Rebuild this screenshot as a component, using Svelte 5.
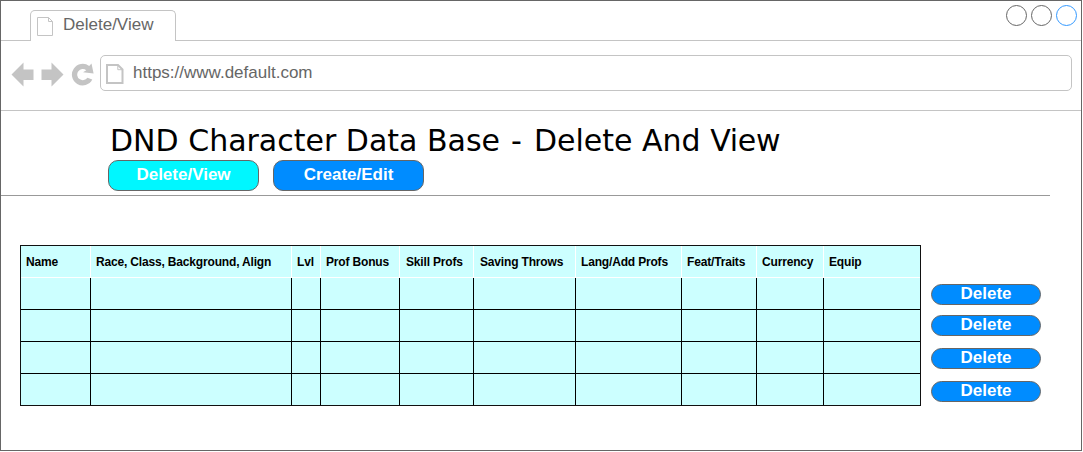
<script>
  const columns = [
    { label: 'Name', width: 70 },
    { label: 'Race, Class, Background, Align', width: 201 },
    { label: 'Lvl', width: 29 },
    { label: 'Prof Bonus', width: 79 },
    { label: 'Skill Profs', width: 74, inset: true },
    { label: 'Saving Throws', width: 102, inset: true },
    { label: 'Lang/Add Profs', width: 106 },
    { label: 'Feat/Traits', width: 75 },
    { label: 'Currency', width: 67 },
    { label: 'Equip', width: 96 },
  ];
  const rows = [1, 2, 3, 4];
</script>

<div class="window">
  <header class="tabs">
    <div class="lead"></div>
    <div class="tab">
      <svg class="tab-icon" width="17" height="20" viewBox="0 0 17 20">
        <path d="M.5 .5H11.5L15.5 4.5V18.5H.5ZM11.5 .5V4.5H15.5" fill="none" stroke="#c4c4c4" />
      </svg>
      <span>Delete/View</span>
    </div>
    <div class="controls">
      <i></i><i></i><i class="active"></i>
    </div>
  </header>

  <div class="toolbar">
    <svg class="nav" width="86" height="26" viewBox="0 0 86 26">
      <g fill="#c4c4c4">
        <path d="M0.5 12.5L12.5 .5V7.5H22.5V18H12.5V24.5Z" />
        <path d="M52.5 12.5L40.5 .5V7.5H30.5V18H40.5V24.5Z" />
        <path d="M80.5 1.5L82.6 11.6L72 10.2L75.3 8.2A5.6 5.6 0 1 0 76.4 15.8L81.3 17.6A10.8 10.8 0 1 1 78.2 4Z" />
      </g>
    </svg>
    <div class="address">
      <svg width="18" height="21" viewBox="0 0 18 21">
        <path d="M1 1H12L16.5 5.5V19H1Z" fill="none" stroke="#c4c4c4" stroke-width="2" />
        <path d="M11.8 1V5.7H16.5" fill="none" stroke="#c4c4c4" />
      </svg>
      <span>https://www.default.com</span>
    </div>
  </div>

  <section class="heading">
    <h1>DND Character Data Base <span class="dash">-</span> Delete And <span class="last">View</span></h1>
    <nav>
      <button class="current">Delete/View</button>
      <button>Create/Edit</button>
    </nav>
  </section>

  <main>
    <table>
      <colgroup>
        {#each columns as c}<col style="width: {c.width}px" />{/each}
      </colgroup>
      <thead>
        <tr>{#each columns as c}<th class:inset={c.inset}>{c.label}</th>{/each}</tr>
      </thead>
      <tbody>
        {#each rows as r}
          <tr>{#each columns as c}<td></td>{/each}</tr>
        {/each}
      </tbody>
    </table>
    <div class="actions">
      {#each rows as r}<button>Delete</button>{/each}
    </div>
  </main>
</div>

<style>
  :global(body) { background: #fff; }
  .window {
    box-sizing: border-box;
    width: 1082px;
    height: 451px;
    border: 1px solid #666;
    background: #fff;
    font-family: "Liberation Sans", Arial, sans-serif;
    overflow: hidden;
  }
  .tabs { display: flex; height: 40px; }
  .lead { width: 29px; box-sizing: border-box; border-bottom: 1px solid #c4c4c4; }
  .tab {
    box-sizing: border-box;
    display: flex;
    width: 146px;
    height: 31px;
    margin-top: 9px;
    border: 1px solid #c4c4c4;
    border-bottom: 0;
    border-radius: 5px 5px 0 0;
    color: #666;
    font-size: 17px;
    line-height: 20px;
  }
  .tab-icon { margin: 6px 9px 0 6px; flex: none; }
  .tab span { margin-top: 4px; }
  .controls {
    flex: 1;
    display: flex;
    justify-content: flex-end;
    gap: 4px;
    padding: 4px 4px 0 0;
    border-bottom: 1px solid #c4c4c4;
  }
  .controls i {
    box-sizing: border-box;
    width: 21px;
    height: 21px;
    border: 1px solid #666;
    border-radius: 50%;
  }
  .controls .active { border-color: #3399ff; }
  .toolbar {
    box-sizing: border-box;
    display: flex;
    height: 70px;
    padding: 14px 9px 0 10px;
    border-bottom: 1px solid #c4c4c4;
  }
  .nav { margin: 7px 3px 0 0; flex: none; }
  .address {
    box-sizing: border-box;
    display: flex;
    flex: 1;
    height: 36px;
    border: 1px solid #c4c4c4;
    border-radius: 5px;
    color: #666;
    font-size: 17px;
    line-height: 20px;
  }
  .address svg { margin: 8px 9px 0 5px; flex: none; }
  .address span { margin-top: 7px; }
  .heading {
    box-sizing: border-box;
    width: 1049px;
    height: 85px;
    padding: 12px 0 0 107px;
    border-bottom: 1px solid #999;
  }
  h1 {
    margin: 0 0 0 2px;
    font: 400 30px/36px "DejaVu Sans", Verdana, sans-serif;
    color: #000;
    white-space: nowrap;
  }
  .dash { margin: 0 2.5px 0 1.5px; }
  .last { letter-spacing: -0.3px; }
  nav { display: flex; gap: 14px; margin-top: 1px; }
  button {
    box-sizing: border-box;
    padding: 0;
    border: 1px solid #666;
    background: #008cff;
    color: #fff;
    font: bold 17px/20px "Liberation Sans", Arial, sans-serif;
  }
  nav button { width: 151px; height: 31px; padding-bottom: 1px; border-radius: 10px; }
  nav .current { background: #00f7ff; }
  main { display: flex; padding: 49px 0 0 19px; }
  table {
    table-layout: fixed;
    box-sizing: border-box;
    width: 901px;
    height: 161px;
    border: 1px solid #111;
    border-spacing: 0;
    background: #ccffff;
  }
  th, td {
    box-sizing: border-box;
    height: 32px;
    padding: 0;
    border-right: 1px solid #000;
    border-bottom: 1px solid #000;
  }
  th {
    padding: 0 0 0 5px;
    border-color: #fff;
    font-size: 12px;
    line-height: 14px;
    letter-spacing: -0.17px;
    text-align: left;
    white-space: nowrap;
    color: #000;
  }
  th.inset { padding-left: 6px; }
  th:last-child, td:last-child { border-right: 0; }
  tbody tr:last-child td { border-bottom: 0; height: 31px; }
  .actions { display: flex; flex-direction: column; gap: 12px; margin: 39px 0 0 10px; }
  .actions button {
    width: 110px;
    height: 21px;
    padding-bottom: 2px;
    border-radius: 10.5px;
    line-height: 17px;
  }
  .actions button:first-child { margin-bottom: -2px; }
</style>
